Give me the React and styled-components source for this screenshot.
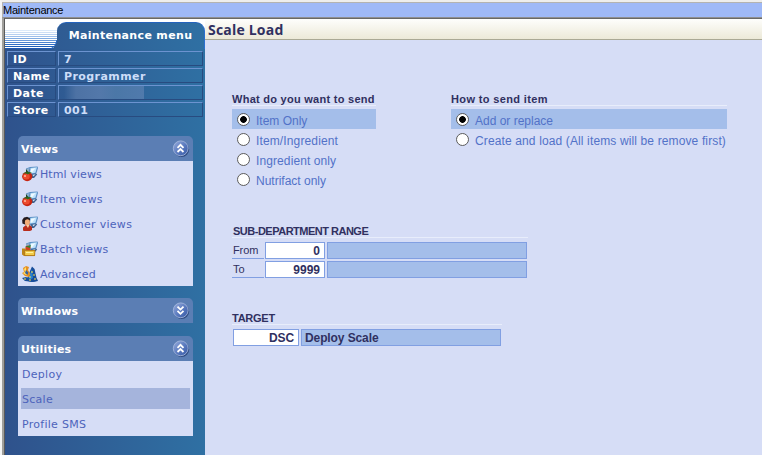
import React from "react";
import styled, { createGlobalStyle } from "styled-components";

const Global = createGlobalStyle`
  * { box-sizing: border-box; }
  body { margin: 0; overflow: hidden; background: #d6ddf6; }
`;

const sans = `"Liberation Sans", Arial, sans-serif`;
const wide = `"DejaVu Sans", Verdana, sans-serif`;

const Window = styled.div`
  width: 762px;
  height: 455px;
  display: flex;
  flex-direction: column;
  background: #d6ddf6;
  border-top: 2px solid #eeeeec;
  border-left: 2px solid #f4f4f4;
`;
const Caption = styled.header`
  height: 15px;
  flex: none;
  background: #9fb9f7;
  border-top: 1px solid #b4b3b0;
  border-left: 1px solid #b4b3b0;
  font: 11px/15px ${sans};
  letter-spacing: -0.25px;
  color: #000;
  white-space: nowrap;
`;
const Frame = styled.div`
  flex: 1;
  min-height: 0;
  display: flex;
  border-top: 1px solid #8f8f90;
  border-left: 2px solid #a09f9b;
`;
const Inner = styled.div`
  flex: 1;
  display: flex;
  border-top: 1px solid #686868;
  border-left: 1px solid #5a5a5a;
`;
const Sidebar = styled.aside`
  width: 200px;
  flex: none;
  height: 436px;
  background: linear-gradient(90deg, #2f528c, #2f70a3);
`;
const TabStrip = styled.div`
  height: 30px;
  display: flex;
  background: #fff;
`;
const Stripes = styled.svg`
  display: block;
  flex: none;
`;
const Tab = styled.div`
  width: 148px;
  height: 27px;
  margin-top: 3px;
  margin-left: -1px;
  border-radius: 9px 9px 0 0;
  background: linear-gradient(90deg, #2f5b93, #2f70a3);
  border-top: 1px solid #2463bd;
  border-right: 1px solid #2a6fd0;
  color: #fff;
  font: bold 11px/26px ${wide};
  letter-spacing: 0.34px;
  text-align: center;
  white-space: nowrap;
`;
const Details = styled.div`
  margin: 2px 2px 0 2px;
  display: grid;
  grid-template-columns: 49px 145px;
  grid-auto-rows: 15px;
  gap: 2px;
`;
const Cell = styled.div`
  border: 1px solid #6c93d0;
  border-right-color: #284b80;
  border-bottom-color: #284b80;
  padding-left: 5px;
  font: bold 11px/15px ${wide};
  letter-spacing: 0.42px;
  color: ${(p) => (p.$value ? "#cdddf8" : "#fff")};
  white-space: nowrap;
`;
const Redacted = styled.span`
  display: block;
  width: 80px;
  height: 13px;
  background: linear-gradient(90deg, #48719f00, #4d72a4 15%, #5378aa 45%, #4b77a7 65%, #507aac);
`;
const Panel = styled.section`
  width: 175px;
  margin: ${(p) => p.$top}px 0 0 13px;
`;
const PanelHead = styled.h2`
  height: 25px;
  margin: 0;
  padding: 0 3px 0 3px;
  display: flex;
  align-items: flex-start;
  justify-content: space-between;
  border-radius: 5px 5px 0 0;
  background: #5b7eb4;
  color: #fff;
  font: bold 11px/27px ${wide};
  letter-spacing: 0.2px;

  svg {
    margin-top: 4px;
  }
`;
const PanelBody = styled.div`
  background: #d6ddf6;
  padding: 0 3px;
`;
const Link = styled.div`
  height: 21px;
  display: flex;
  align-items: flex-start;
  gap: 2px;
  padding-left: 1px;
  background: ${(p) => (p.$active ? "#a5b4dc" : "transparent")};
  color: #4d63bb;
  font: 11px/23px ${wide};
  letter-spacing: ${(p) => p.$track ?? 0.28}px;
  white-space: nowrap;

  svg {
    margin-top: 3px;
  }
`;
const LinkRow = styled.div`
  height: 25px;
  padding-top: 2px;
`;
const Main = styled.main`
  flex: 1;
  min-width: 0;
  background: #d6ddf6;
  color: #303060;
`;
const PageTitle = styled.h1`
  height: 21px;
  margin: 0;
  padding-left: 3px;
  background: linear-gradient(#fefefc, #ece9d8);
  border-bottom: 1px solid #aaa995;
  font: bold 14px/21px "Open Sans", sans-serif;
  letter-spacing: 0.2px;
  color: #303060;
`;
const Options = styled.div`
  display: flex;
  align-items: flex-start;
  gap: 75px;
  padding: 51px 0 0 27px;
`;
const Group = styled.div`
  width: ${(p) => p.$width}px;
`;
const GroupTitle = styled.h3`
  height: 15px;
  margin: 0 0 ${(p) => p.$gap || 3}px;
  padding-left: ${(p) => p.$indent || 0}px;
  border-bottom: 1px solid #e8edfb;
  font: bold 11px/17px ${sans};
  letter-spacing: ${(p) => p.$track || 0}px;
  color: #303060;
  white-space: nowrap;
`;
const Option = styled.label`
  height: 20px;
  display: flex;
  padding: 4px 0 0 5px;
  background: ${(p) => (p.$selected ? "#a4beea" : "transparent")};
`;
const Radio = styled.span`
  width: 13px;
  height: 13px;
  flex: none;
  border: 1px solid #5b5b5b;
  border-radius: 50%;
  background: ${(p) =>
    p.$selected ? "radial-gradient(circle, #000 3px, #fff 3.7px)" : "#fff"};
`;
const OptionText = styled.span`
  margin-left: 6px;
  font: 12px/16px ${sans};
  letter-spacing: ${(p) => p.$track || 0}px;
  color: #5272c8;
  white-space: nowrap;
`;
const Fieldset = styled.div`
  width: ${(p) => p.$width}px;
  margin: ${(p) => p.$top}px 0 0 27px;
`;
const FieldRow = styled.div`
  height: 17px;
  margin-bottom: 2px;
  padding-left: ${(p) => p.$indent || 0}px;
  display: flex;
  gap: 2px;
`;
const FieldLabel = styled.span`
  width: 32px;
  margin-right: -1px;
  flex: none;
  border-bottom: 1px solid #819fe2;
  font: 11px/16px ${sans};
  letter-spacing: -0.1px;
  padding-left: 1px;
`;
const Box = styled.span`
  width: ${(p) => p.$width}px;
  height: 17px;
  flex: none;
  padding: 0 4px 0 ${(p) => (p.$filled ? 3 : 0)}px;
  border: 1px solid #819fe2;
  background: ${(p) => (p.$filled ? "#a4beea" : "#fff")};
  font: bold 12px/16px ${sans};
  text-align: ${(p) => (p.$filled ? "left" : "right")};
  letter-spacing: ${(p) => p.$track || 0}px;
  white-space: nowrap;
`;

function Chevrons({ down }) {
  return (
    <svg width="18" height="18" viewBox="0 0 18 18">
      <defs>
        <linearGradient id="orb" x1="0" y1="0" x2="1" y2="1">
          <stop offset="0" stopColor="#9aafdc" />
          <stop offset="0.5" stopColor="#5d7cc0" />
          <stop offset="1" stopColor="#3458a4" />
        </linearGradient>
      </defs>
      <circle cx="9.6" cy="9.4" r="7.6" fill="#304c83" />
      <circle cx="8.7" cy="8.3" r="7.4" fill="url(#orb)" stroke="#a9bbe0" strokeWidth="0.8" />
      <path
        d={down ? "M5.5 4.6L8.5 7.6L11.5 4.6M5.5 8.8L8.5 11.8L11.5 8.8" : "M5.5 7.8L8.5 4.8L11.5 7.8M5.5 12L8.5 9L11.5 12"}
        fill="none"
        stroke="#fff"
        strokeWidth="1.8"
      />
    </svg>
  );
}

function Monitor() {
  return (
    <g>
      <path d="M4 2.5L8 1L15.5 0.5L16 2L14.5 7L13 10L10.5 10.5L5 8Z" fill="#5a8fc4" />
      <path d="M8.5 2L15 1.2L13.4 6.8L8 7.5Z" fill="#bfe2fb" />
      <path d="M9 3L13.5 2L10 6.5L8.5 6.5Z" fill="#eefaff" />
      <path d="M4 3L7.6 2L6.8 5L4.5 6Z" fill="#8fb0cf" />
      <path d="M9 8.2L14 7.4L15.2 8.4L12 12L9.5 12Z" fill="#3c5f8d" />
      <path d="M10.4 8.8L13.6 8.2L11.4 10.6Z" fill="#d5e2ef" />
    </g>
  );
}
function TomatoIcon() {
  return (
    <svg width="16" height="16" viewBox="0 0 16 16">
      <Monitor />
      <ellipse cx="5.2" cy="10.6" rx="5.1" ry="4.6" fill="#c72612" />
      <ellipse cx="4.4" cy="10.4" rx="3.4" ry="3" fill="#ec4a2e" />
      <circle cx="3" cy="10" r="1.1" fill="#ffb699" />
      <path d="M0.8 7.2L3.5 6.2L5 4.6L6.4 6L10 6.6L7.6 7.6L5.8 8.6L4 7.6Z" fill="#2c6a22" />
      <path d="M5 6.5L4.4 3.6" stroke="#183a18" />
    </svg>
  );
}
function CustomerIcon() {
  return (
    <svg width="16" height="16" viewBox="0 0 16 16">
      <Monitor />
      <path d="M1 14.5V11.5L4 9H7.5L10 11V14L8 15H2Z" fill="#b92d1d" />
      <path d="M0.2 4L2 1.4H6L8 3.4L7 8.4L3 8.6L0.4 7.6Z" fill="#281b1c" />
      <ellipse cx="5.4" cy="6.2" rx="2.5" ry="3.2" fill="#f3ad79" />
      <path d="M4 9L6 12L7.4 9Z" fill="#f8cda2" />
      <path d="M2.4 4.6Q5 2.4 8 4V2.4L5 0.8L2 2Z" fill="#211b20" />
    </svg>
  );
}
function BatchIcon() {
  return (
    <svg width="16" height="16" viewBox="0 0 16 16">
      <Monitor />
      <circle cx="6" cy="7" r="2.6" fill="#d34220" />
      <path d="M3 5L6 5L9 4L8 7L5 6Z" fill="#35812d" />
      <path d="M0 7.5H3.4L4.4 9H13V15H2L0 13.6Z" fill="#bd8519" />
      <path d="M2.4 9.6H13L12.6 14.6H2.8Z" fill="#f2cc4b" stroke="#a66b12" strokeWidth="0.7" />
      <path d="M4 11.5H11" stroke="#fff29a" />
    </svg>
  );
}
function WizardIcon() {
  return (
    <svg width="16" height="16" viewBox="0 0 16 16">
      <path d="M10 0.6L12.6 3L13.4 7L14.6 12L16 14.8L10 16L2 14L6 11L8 5Z" fill="#174d9a" />
      <path d="M10 3L11 12L8 14L6 13Z" fill="#2681cf" />
      <path d="M1 2L4 0L7 1L6 4L8.4 8L7 11L3 10L0 7L2 6Z" fill="#e69021" />
      <path d="M2 3L4 1L4 5L6 8L4 9L1 7L3 6Z" fill="#ffe26a" />
      <path d="M4 4L6.4 6.4L5.4 9L3 7Z" fill="#37619b" />
      <path d="M0 12L4 11L8 13L13 13L16 15L11 16L3 15Z" fill="#174d9a" />
      <path d="M2 13H4M7 14H9M12 13H14M9 6H11M11 9H13M7 11H9" stroke="#ffe249" strokeWidth="1.2" />
    </svg>
  );
}

const views = [
  ["Html views", TomatoIcon, 0.1],
  ["Item views", TomatoIcon, 0.32],
  ["Customer views", CustomerIcon, 0.3],
  ["Batch views", BatchIcon, 0.2],
  ["Advanced", WizardIcon, 0.2],
];
const stripes = ["#dceafa", "#cddff6", "#b7d0f1", "#9dbeea", "#82ace2", "#6596d8", "#4b82cf", "#326fc6", "#1e5eb8"];

export default function App() {
  return (
    <Window>
      <Global />
      <Caption>Maintenance</Caption>
      <Frame>
        <Inner>
          <Sidebar>
            <TabStrip>
              <Stripes width="53" height="30" viewBox="0 0 53 30">
                {stripes.map((c, i) => (
                  <rect key={c} x="0" y={11 + i * 2} width="53" height="1" fill={c} />
                ))}
                <rect x="0" y="29" width="53" height="1" fill="#1d57b3" />
                <path d="M46 30Q50.5 28.5 52 21H53V30Z" fill="#2f5b93" />
                <path d="M46 29.5Q50.5 28 52 21" fill="none" stroke="#2463bd" />
              </Stripes>
              <Tab>Maintenance menu</Tab>
            </TabStrip>
            <Details>
              <Cell>ID</Cell>
              <Cell $value>7</Cell>
              <Cell>Name</Cell>
              <Cell $value>Programmer</Cell>
              <Cell>Date</Cell>
              <Cell $value><Redacted /></Cell>
              <Cell>Store</Cell>
              <Cell $value>001</Cell>
            </Details>
            <Panel $top={19}>
              <PanelHead>Views<Chevrons /></PanelHead>
              <PanelBody>
                {views.map(([label, Icon, track]) => (
                  <LinkRow key={label}><Link $track={track}><Icon />{label}</Link></LinkRow>
                ))}
              </PanelBody>
            </Panel>
            <Panel $top={12}>
              <PanelHead>Windows<Chevrons down /></PanelHead>
            </Panel>
            <Panel $top={13}>
              <PanelHead>Utilities<Chevrons /></PanelHead>
              <PanelBody>
                <LinkRow><Link>Deploy</Link></LinkRow>
                <LinkRow><Link $active>Scale</Link></LinkRow>
                <LinkRow><Link>Profile SMS</Link></LinkRow>
              </PanelBody>
            </Panel>
          </Sidebar>
          <Main>
            <PageTitle>Scale Load</PageTitle>
            <Options>
              <Group $width={144}>
                <GroupTitle $track={0.27}>What do you want to send</GroupTitle>
                <Option $selected><Radio $selected /><OptionText>Item Only</OptionText></Option>
                <Option><Radio /><OptionText $track={0.13}>Item/Ingredient</OptionText></Option>
                <Option><Radio /><OptionText $track={0.1}>Ingredient only</OptionText></Option>
                <Option><Radio /><OptionText>Nutrifact only</OptionText></Option>
              </Group>
              <Group $width={276}>
                <GroupTitle $track={0.36}>How to send item</GroupTitle>
                <Option $selected><Radio $selected /><OptionText>Add or replace</OptionText></Option>
                <Option><Radio /><OptionText $track={0.13}>Create and load (All items will be remove first)</OptionText></Option>
              </Group>
            </Options>
            <Fieldset $width={296} $top={34}>
              <GroupTitle $gap={4} $indent={1} $track={-0.5}>SUB-DEPARTMENT RANGE</GroupTitle>
              <FieldRow><FieldLabel>From</FieldLabel><Box $width={60}>0</Box><Box $filled $width={200} /></FieldRow>
              <FieldRow><FieldLabel>To</FieldLabel><Box $width={60}>9999</Box><Box $filled $width={200} /></FieldRow>
            </Fieldset>
            <Fieldset $width={270} $top={32}>
              <GroupTitle $gap={4} $track={-0.25}>TARGET</GroupTitle>
              <FieldRow $indent={1}><Box $width={66} $track={-0.1}>DSC</Box><Box $filled $width={200} $track={-0.1}>Deploy Scale</Box></FieldRow>
            </Fieldset>
          </Main>
        </Inner>
      </Frame>
    </Window>
  );
}
